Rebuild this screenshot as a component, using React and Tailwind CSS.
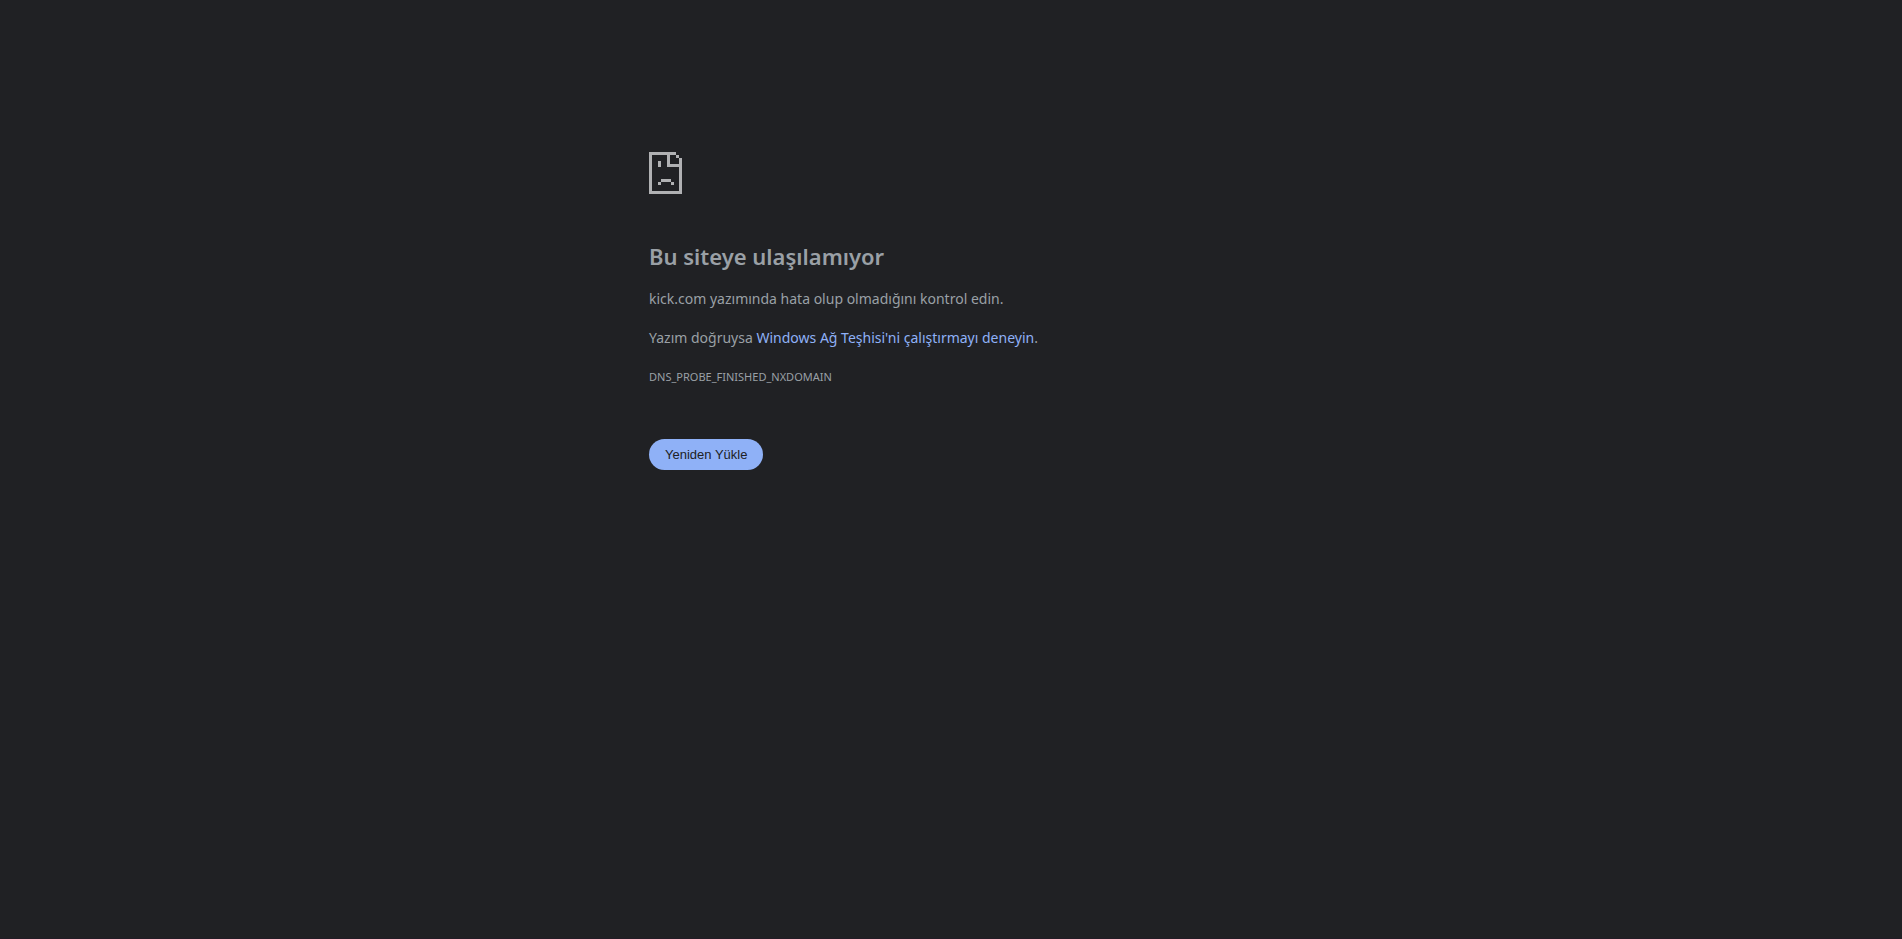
export default function App() {
  return (
    <div className="min-h-screen flex flex-col bg-[#202124] border-b border-[#231c26] text-[#9aa0a6] font-['Noto_Sans',sans-serif]">
      <main className="w-full max-w-[604px] mx-auto pt-[152px]">
        {/* Sad page icon */}
        <svg
          className="w-[33px] h-[42px] fill-[#b0b1b3]"
          viewBox="0 0 33 42"
          shapeRendering="crispEdges"
          aria-hidden="true"
        >
          {/* page outline */}
          <path d="M0 0h27v3H3v36h27V6h3v36H0z" />
          {/* folded corner */}
          <path d="M18 3h3v9h9v3H18zM27 3h3v3h-3z" />
          {/* face */}
          <path d="M9 9h3v6H9zM12 27h10v3H12zM9 30h3v3H9zM22 30h3v3h-3z" />
        </svg>

        <h1 className="mt-12 pb-0.5 text-[22px] leading-7 font-semibold">Bu siteye ulaşılamıyor</h1>
        <p className="mt-[15px] text-sm leading-6">
          kick.com yazımında hata olup olmadığını kontrol edin.
        </p>
        <p className="mt-[15px] text-sm leading-6">
          Yazım doğruysa{' '}
          <a href="#diagnose" className="text-[#8fb1f7]">
            Windows Ağ Teşhisi'ni çalıştırmayı deneyin
          </a>
          .
        </p>
        <p className="mt-[15px] text-[11px] leading-6">DNS_PROBE_FINISHED_NXDOMAIN</p>

        <button
          type="button"
          className="mt-[50px] h-[31px] px-4 rounded-full bg-[#8fb1f7] text-[#202124] text-[13px] font-['Liberation_Sans',sans-serif]"
        >
          Yeniden Yükle
        </button>
      </main>
    </div>
  );
}
